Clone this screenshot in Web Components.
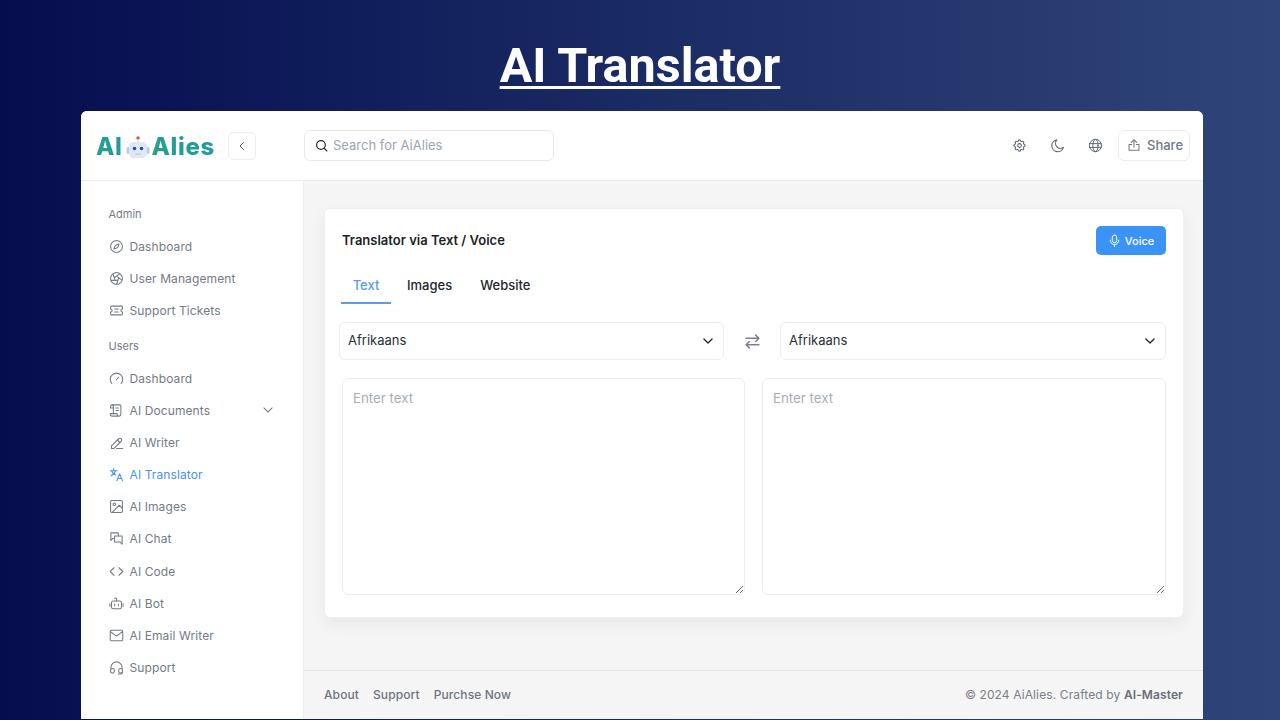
<!DOCTYPE html>
<html lang="en">
<head>
<meta charset="utf-8">
<title>AI Translator</title>
<style>
  html, body { margin: 0; height: 720px; overflow: hidden; }
  body {
    background: linear-gradient(90deg, #060d4f 0%, #0f1c5a 25%, #1f3068 60%, #2f4579 100%);
    font-family: Inter, "Liberation Sans", sans-serif;
  }
</style>
</head>
<body>
<page-title>AI Translator</page-title>
<app-window></app-window>

<script>
const icons = {
  compass: '<circle cx="12" cy="12" r="9.5"/><path d="M16 8l-2 5.800-5.900 2.200 2.100-5.900z"/>',
  aperture: '<circle cx="12" cy="12" r="9.500"/><path d="M3.600 15h10.550M6.551 4.938l3.260 10.034M17.032 4.636l-8.535 6.201M20.559 14.510l-8.535-6.201M12.257 20.916l3.261-10.034"/>',
  ticket: '<path d="M4 5h16a1.500 1.500 0 0 1 1.500 1.500V9.500a2.500 2.500 0 0 0 0 5v3a1.500 1.500 0 0 1-1.500 1.500H4a1.500 1.500 0 0 1-1.500-1.500v-3a2.500 2.500 0 0 0 0-5V6.500A1.500 1.500 0 0 1 4 5z"/><path d="M9 9.500h6M9 14.500h6"/>',
  gauge: '<path d="M4.500 20A10 10 0 1 1 19.500 20"/><path d="M12 14l3.500-4"/>',
  script: '<path d="M5 3h12a2 2 0 0 1 2 2v13a3 3 0 0 1-3 3H5a3 3 0 0 1-3-3v-1h11v1a3 3 0 0 0 3 3"/><path d="M5 3a2.500 2.500 0 0 0-2.500 2.500V8H7V5.500A2.500 2.500 0 0 0 5 3z"/><path d="M7 8v9M11 8h4M11 12h4"/>',
  pen: '<path d="M4 17.500L15.500 6a2.800 2.800 0 0 1 4 4L8 21.500H4z"/><path d="M13.500 8l4 4"/><path d="M12 21.500h10"/>',
  translate: '<path d="M2 6h11M7.500 2.500V6M10.500 6c-1 3.500-3.500 6.500-7.500 8.500M4 6c1 3 3.500 5.500 7 7"/><path d="M12.500 22l4.500-11 4.500 11M14 18.500h6"/>',
  image: '<rect x="2.500" y="2.500" width="19" height="19" rx="2"/><circle cx="8.500" cy="8.500" r="2"/><path d="M21.500 15l-5-5L5 21.500"/>',
  chat: '<path d="M15 8V3H3v12l3-3h2"/><path d="M9 8h12v13l-3.500-3.500H9z"/>',
  code: '<path d="M8 6l-6 6 6 6M16 6l6 6-6 6"/>',
  bot: '<rect x="4" y="8" width="16" height="12.500" rx="3"/><path d="M12 8V3.500M9 3.500h3"/><path d="M1.500 12.500v4M22.500 12.500v4"/><path d="M9 13v2.500M15 13v2.500"/>',
  mail: '<rect x="2" y="3.500" width="20" height="17" rx="2"/><path d="M2.500 6l9.500 7 9.500-7"/>',
  headset: '<path d="M3 14v-2a9 9 0 0 1 18 0v2"/><rect x="2.500" y="13.500" width="6" height="7.500" rx="3"/><rect x="15.500" y="13.500" width="6" height="7.500" rx="3"/><path d="M21.500 19v1a2.500 2.500 0 0 1-2.500 2.500h-4"/>',
  chevronDown: '<path d="M5 8.500l7 7 7-7"/>',
  chevronLeft: '<path d="M15 5l-7 7 7 7"/>',
  search: '<circle cx="11" cy="11" r="8"/><path d="M17 17l5 5"/>',
  gear: '<path d="M10.325 4.317c.426-1.756 2.924-1.756 3.350 0a1.724 1.724 0 0 0 2.573 1.066c1.543-.94 3.310.826 2.370 2.370a1.724 1.724 0 0 0 1.065 2.572c1.756.426 1.756 2.924 0 3.350a1.724 1.724 0 0 0-1.066 2.573c.94 1.543-.826 3.310-2.370 2.370a1.724 1.724 0 0 0-2.572 1.065c-.426 1.756-2.924 1.756-3.350 0a1.724 1.724 0 0 0-2.573-1.066c-1.543.94-3.310-.826-2.370-2.370a1.724 1.724 0 0 0-1.065-2.572c-1.756-.426-1.756-2.924 0-3.350a1.724 1.724 0 0 0 1.066-2.573c-.94-1.543.826-3.310 2.370-2.370 1 .608 2.296.07 2.572-1.065z"/><circle cx="12" cy="12" r="3"/>',
  moon: '<path d="M11 3a9.500 9.500 0 1 0 10.500 12A8 8 0 0 1 11 3z"/>',
  globe: '<circle cx="12" cy="12" r="9.800"/><ellipse cx="12" cy="12" rx="4.200" ry="9.800"/><path d="M2.800 9h18.400M2.800 15h18.400"/>',
  upload: '<path d="M12 16V3M7.500 7.500L12 3l4.500 4.500"/><path d="M8 11H3.500v10h17V11H16"/>',
  mic: '<rect x="8" y="2" width="8" height="14" rx="4"/><path d="M4 11.500a8 8 0 0 0 16 0M12 19.500V23"/>',
  swap: '<path d="M3 7.500h18M16.500 3l4.500 4.500-4.500 4.500"/><path d="M21 16.500H3M7.500 12L3 16.500 7.500 21"/>'
};

function icon(name, size, stroke) {
  return `<svg width="${size}" height="${size}" viewBox="0 0 24 24" fill="none" stroke="currentColor" stroke-width="${stroke || 1.8}" stroke-linecap="round" stroke-linejoin="round" aria-hidden="true">${icons[name]}</svg>`;
}

class PageTitle extends HTMLElement {
  constructor() {
    super();
    this.attachShadow({ mode: 'open' }).innerHTML = `
      <style>
        :host { display: flex; height: 111px; justify-content: center; align-items: flex-start; }
        h1 {
          margin: 37px 0 0 0;
          font: 700 48.500px/58px Roboto, "Liberation Sans", sans-serif;
          color: #fff;
          text-decoration: underline;
          text-decoration-thickness: 3px;
          text-underline-offset: 4px;
        }
      </style>
      <h1><slot></slot></h1>`;
  }
}

class BrandLogo extends HTMLElement {
  constructor() {
    super();
    this.attachShadow({ mode: 'open' }).innerHTML = `
      <style>
        :host { display: flex; align-items: center; width: 118px; height: 30px; }
        span {
          margin-top: 3px;
          font: 800 24px/30px Inter, Lato, sans-serif;
          letter-spacing: .6px;
          background: linear-gradient(90deg, #27a08a, #1f9aa4);
          -webkit-background-clip: text;
          background-clip: text;
          color: transparent;
        }
        svg { flex: none; margin: 4px 2px 0 3px; }
      </style>
      <span>AI</span>
      <svg width="24" height="23" viewBox="0 0 24 23" aria-hidden="true">
        <circle cx="12" cy="2" r="1.800" fill="#e8506a"/>
        <rect x="11.400" y="3" width="1.200" height="4" fill="#c9d6ea"/>
        <rect x="0.500" y="11" width="3.500" height="7" rx="1.700" fill="#b9cbe6"/>
        <rect x="20" y="11" width="3.500" height="7" rx="1.700" fill="#b9cbe6"/>
        <rect x="3" y="6" width="18" height="16" rx="4.500" fill="#dfe8f6"/>
        <circle cx="8.500" cy="12.500" r="1.800" fill="#2c4c9c"/>
        <circle cx="15.500" cy="12.500" r="1.800" fill="#2c4c9c"/>
        <path d="M9.500 17.500q2.500 1.600 5 0" stroke="#b4c4df" stroke-width="1.100" fill="none"/>
      </svg>
      <span>Alies</span>`;
  }
}

class TopBar extends HTMLElement {
  constructor() {
    super();
    this.attachShadow({ mode: 'open' }).innerHTML = `
      <style>
        :host {
          display: flex; align-items: center; flex: none; height: 69px;
          background: #fff; border-bottom: 1px solid #ececec; color: #6b7280;
          font: 400 13px Inter, sans-serif;
        }
        .brand { display: flex; align-items: center; width: 223px; padding-left: 15px; box-sizing: border-box; }
        .back {
          display: flex; align-items: center; justify-content: center;
          width: 28px; height: 28px; margin-left: 14px; box-sizing: border-box;
          border: 1px solid #ececec; border-radius: 5px; color: #555d6b;
        }
        .search {
          display: flex; align-items: center; gap: 5px; width: 250px; height: 31px;
          box-sizing: border-box; padding: 0 0 1px 10px; border: 1px solid #e8e8e8; border-radius: 6px;
          color: #9ca3af;
        }
        .search svg { color: #20252e; }
        .tools { display: flex; align-items: center; margin-left: auto; padding-right: 13px; }
        .tool { display: flex; width: 38px; justify-content: center; color: #5f6672; }
        .share {
          display: flex; align-items: center; gap: 6px; height: 31px; width: 72px; margin-left: 4px;
          box-sizing: border-box; padding: 0 0 1px 8px; border: 1px solid #ececec; border-radius: 6px;
          font-weight: 500; color: #717784;
        }
      </style>
      <div class="brand"><brand-logo></brand-logo><div class="back">${icon('chevronLeft', 12, 2)}</div></div>
      <div class="search">${icon('search', 13, 2.2)}<span>Search for AiAlies</span></div>
      <div class="tools">
        <div class="tool">${icon('gear', 15, 1.7)}</div>
        <div class="tool">${icon('moon', 15)}</div>
        <div class="tool">${icon('globe', 15, 1.6)}</div>
        <div class="share">${icon('upload', 14)}<span>Share</span></div>
      </div>`;
  }
}

class NavItem extends HTMLElement {
  constructor() {
    super();
    const active = this.hasAttribute('active');
    const more = this.hasAttribute('more');
    this.attachShadow({ mode: 'open' }).innerHTML = `
      <style>
        :host {
          display: flex; align-items: center; gap: 6px; height: 32.200px;
          color: ${active ? '#4a90e8' : '#747a86'}; font: 400 12px Inter, sans-serif;
          letter-spacing: .1px;
        }
        svg { flex: none; }
        .more { margin-left: auto; display: flex; }
      </style>
      ${icon(this.getAttribute('icon'), 15, 1.7)}
      <slot></slot>
      ${more ? `<span class="more">${icon('chevronDown', 14, 1.8)}</span>` : ''}`;
  }
}

class NavGroup extends HTMLElement {
  constructor() {
    super();
    this.attachShadow({ mode: 'open' }).innerHTML = `
      <style>
        :host { display: block; }
        h4 {
          margin: 0; height: 31px; font: 400 11px/31px Inter, sans-serif;
          color: #747a86;
        }
      </style>
      <h4>${this.getAttribute('label')}</h4>
      <slot></slot>`;
  }
}

class SideNav extends HTMLElement {
  constructor() {
    super();
    this.attachShadow({ mode: 'open' }).innerHTML = `
      <style>
        :host {
          display: flex; flex-direction: column; gap: 4.400px; flex: none; width: 223px; box-sizing: border-box;
          padding: 18px 28px 0 27.500px; background: #fff; border-right: 1px solid #ececec;
        }
      </style>
      <slot></slot>`;
  }
}

class LangSelect extends HTMLElement {
  constructor() {
    super();
    this.attachShadow({ mode: 'open' }).innerHTML = `
      <style>
        :host { display: block; position: relative; flex: 1; }
        select {
          appearance: none; -webkit-appearance: none; display: block; width: 100%; height: 38px;
          box-sizing: border-box; padding: 0 30px 2px 8px; background: #fff;
          border: 1px solid #ececec; border-radius: 6px; outline: none;
          font: 400 13px Inter, sans-serif; color: #2b2f36;
        }
        svg { position: absolute; right: 9px; top: 12px; color: #20252e; pointer-events: none; }
      </style>
      <select><option>Afrikaans</option></select>
      ${icon('chevronDown', 14, 2.2)}`;
  }
}

class TranslatorCard extends HTMLElement {
  constructor() {
    super();
    this.attachShadow({ mode: 'open' }).innerHTML = `
      <style>
        :host {
          display: block; height: 410px; box-sizing: border-box; padding: 18px 17px 0 17px;
          background: #fff; border: 1px solid #efefef; border-radius: 6px;
          box-shadow: 0 6px 16px rgba(0,0,0,.06); font-family: Inter, sans-serif;
        }
        .head { display: flex; align-items: center; justify-content: space-between; height: 29px; margin-top: -1px; }
        h3 { margin: 0 0 2px 0; font: 600 13px Inter, sans-serif; color: #1b1f26; }
        .voice {
          display: flex; align-items: center; gap: 4px; height: 29px; width: 70px; box-sizing: border-box;
          justify-content: center; background: #3b93f7; color: #fff; border-radius: 5px;
          font: 500 11px Inter, sans-serif;
        }
        .tabs { display: flex; margin-top: 13px; margin-left: -1px; height: 36px; }
        .tab { padding: 0 14px; font: 500 13px/34px Inter, sans-serif; color: #22262d; }
        .tab.on { width: 50px; box-sizing: border-box; padding: 0; margin-right: 2px; text-align: center; color: #5a9bea; border-bottom: 2px solid #5a9bea; height: 36px; }
        .langs { display: flex; align-items: center; margin: 18px 0 0 -3px; }
        .langs lang-select:first-child { flex: 0 0 385px; }
        .swap { flex: none; width: 56px; display: flex; justify-content: center; padding-left: 1px; box-sizing: border-box; color: #7b8088; }
        .boxes { display: flex; gap: 17px; margin-top: 18px; }
        textarea {
          flex: 1; min-width: 0; height: 217px; box-sizing: border-box; padding: 11px 10px; margin: 0;
          border: 1px solid #ececec; border-radius: 6px; outline: none; background: #fff;
          font: 400 13.300px Inter, sans-serif; color: #2b2f36;
        }
        textarea:first-child { flex: 0 0 403px; }
        textarea::placeholder { color: #a8adb5; opacity: 1; }
      </style>
      <div class="head">
        <h3>Translator via Text / Voice</h3>
        <div class="voice">${icon('mic', 13, 1.8)}<span>Voice</span></div>
      </div>
      <div class="tabs">
        <div class="tab on">Text</div>
        <div class="tab">Images</div>
        <div class="tab">Website</div>
      </div>
      <div class="langs">
        <lang-select></lang-select>
        <div class="swap">${icon('swap', 17, 2.2)}</div>
        <lang-select></lang-select>
      </div>
      <div class="boxes">
        <textarea placeholder="Enter text"></textarea>
        <textarea placeholder="Enter text"></textarea>
      </div>`;
  }
}

class AppFooter extends HTMLElement {
  constructor() {
    super();
    this.attachShadow({ mode: 'open' }).innerHTML = `
      <style>
        :host {
          display: flex; align-items: center; justify-content: space-between; flex: none; height: 49px;
          box-sizing: border-box; padding: 0 20px 1px 20px; border-top: 1px solid #e6e6e6; color: #6e7480;
          font: 500 12px Inter, sans-serif;
        }
        nav { display: flex; gap: 14px; letter-spacing: .1px; }
        .copy { font-weight: 400; letter-spacing: .12px; color: #7a7f88; }
        b { font-weight: 600; letter-spacing: .1px; color: #6a6f78; }
      </style>
      <nav><span>About</span><span>Support</span><span>Purchse Now</span></nav>
      <div class="copy">© 2024 AiAlies. Crafted by <b>AI-Master</b></div>`;
  }
}

class AppWindow extends HTMLElement {
  constructor() {
    super();
    this.attachShadow({ mode: 'open' }).innerHTML = `
      <style>
        :host {
          display: flex; flex-direction: column; width: 1122px; height: 608px; margin-left: 81px;
          background: #f5f5f5; border-radius: 6px 6px 0 0; overflow: hidden;
        }
        .body { display: flex; flex: 1; min-height: 0; }
        .main { display: flex; flex-direction: column; flex: 1; min-width: 0; }
        .content { flex: 1; padding: 27px 19px 0 20px; }
      </style>
      <top-bar></top-bar>
      <div class="body">
        <side-nav>
          <nav-group label="Admin">
            <nav-item icon="compass">Dashboard</nav-item>
            <nav-item icon="aperture">User Management</nav-item>
            <nav-item icon="ticket">Support Tickets</nav-item>
          </nav-group>
          <nav-group label="Users">
            <nav-item icon="gauge">Dashboard</nav-item>
            <nav-item icon="script" more>AI Documents</nav-item>
            <nav-item icon="pen">AI Writer</nav-item>
            <nav-item icon="translate" active>AI Translator</nav-item>
            <nav-item icon="image">AI Images</nav-item>
            <nav-item icon="chat">AI Chat</nav-item>
            <nav-item icon="code">AI Code</nav-item>
            <nav-item icon="bot">AI Bot</nav-item>
            <nav-item icon="mail">AI Email Writer</nav-item>
            <nav-item icon="headset">Support</nav-item>
          </nav-group>
        </side-nav>
        <div class="main">
          <div class="content"><translator-card></translator-card></div>
          <app-footer></app-footer>
        </div>
      </div>`;
  }
}

customElements.define('page-title', PageTitle);
customElements.define('brand-logo', BrandLogo);
customElements.define('top-bar', TopBar);
customElements.define('nav-item', NavItem);
customElements.define('nav-group', NavGroup);
customElements.define('side-nav', SideNav);
customElements.define('lang-select', LangSelect);
customElements.define('translator-card', TranslatorCard);
customElements.define('app-footer', AppFooter);
customElements.define('app-window', AppWindow);
</script>
</body>
</html>
